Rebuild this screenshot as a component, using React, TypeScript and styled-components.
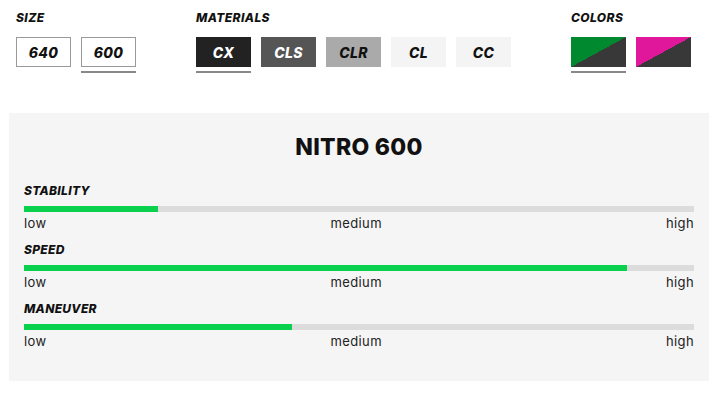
import React from "react";
import styled, { createGlobalStyle } from "styled-components";

const GlobalStyle = createGlobalStyle`
  body {
    margin: 0;
    background: #fff;
    font-family: Inter, "Liberation Sans", sans-serif;
    color: #111;
  }
`;

const Page = styled.div`
  width: 724px;
  height: 402px;
  overflow: hidden;
`;

const Options = styled.div`
  display: flex;
  gap: 60px;
  padding: 10px 16px 0;
`;

const Group = styled.div`
  display: flex;
  flex-direction: column;
`;

const Label = styled.div`
  font-size: 12px;
  line-height: 16px;
  font-weight: 800;
  font-style: italic;
  letter-spacing: 0.4px;
  text-transform: uppercase;
  margin-bottom: 11px;
`;

const Row = styled.div`
  display: flex;
  gap: 10px;
`;

const Choice = styled.div<{ $selected?: boolean }>`
  display: flex;
  flex-direction: column;
  &::after {
    content: "";
    height: 2px;
    margin-top: 4px;
    background: ${p => (p.$selected ? "#888" : "transparent")};
  }
`;

const SizeBox = styled.div`
  width: 55px;
  height: 30px;
  box-sizing: border-box;
  border: 1px solid #999;
  display: flex;
  align-items: center;
  justify-content: center;
  font-size: 14px;
  font-weight: 800;
  font-style: italic;
  letter-spacing: 0.3px;
`;

const MaterialBox = styled.div<{ $bg: string; $fg: string }>`
  width: 55px;
  height: 30px;
  display: flex;
  align-items: center;
  justify-content: center;
  font-size: 14px;
  font-weight: 800;
  font-style: italic;
  letter-spacing: 0.3px;
  background: ${p => p.$bg};
  color: ${p => p.$fg};
`;

const Swatch = styled.div<{ $color: string }>`
  width: 55px;
  height: 30px;
  background: linear-gradient(to bottom right, ${p => p.$color} 50%, #383838 50%);
`;

const Panel = styled.div`
  margin: 40px 0 0 9px;
  width: 700px;
  height: 268px;
  box-sizing: border-box;
  background: #f5f5f5;
  padding: 21px 15px 0;
`;

const Title = styled.h2`
  margin: 0 0 23px;
  text-align: center;
  font-size: 23px;
  line-height: 26px;
  font-weight: 800;
  letter-spacing: 0.3px;
`;

const Stat = styled.div`
  margin-bottom: 10px;
`;

const StatName = styled.div`
  font-size: 12px;
  line-height: 16px;
  font-weight: 800;
  font-style: italic;
  letter-spacing: 0.3px;
  text-transform: uppercase;
  margin-bottom: 7px;
`;

const Track = styled.div`
  height: 6px;
  background: #dcdcdc;
`;

const Fill = styled.div`
  height: 100%;
  background: #09d04d;
`;

const Scale = styled.div`
  display: flex;
  justify-content: space-between;
  margin-top: 2px;
  font-size: 13px;
  line-height: 18px;
  letter-spacing: 0.4px;
  color: #222;
`;

const sizes = [
  { name: "640", selected: false },
  { name: "600", selected: true },
];

const materials = [
  { name: "CX", bg: "#222", fg: "#fff", selected: true },
  { name: "CLS", bg: "#555", fg: "#fff", selected: false },
  { name: "CLR", bg: "#aaa", fg: "#111", selected: false },
  { name: "CL", bg: "#f4f4f4", fg: "#111", selected: false },
  { name: "CC", bg: "#f4f4f4", fg: "#111", selected: false },
];

const colors = [
  { color: "#00892e", selected: true },
  { color: "#e0179a", selected: false },
];

const stats = [
  { name: "Stability", value: 0.2 },
  { name: "Speed", value: 0.9 },
  { name: "Maneuver", value: 0.4 },
];

export default function App() {
  return (
    <Page>
      <GlobalStyle />
      <Options>
        <Group>
          <Label>Size</Label>
          <Row>
            {sizes.map(s => (
              <Choice key={s.name} $selected={s.selected}>
                <SizeBox>{s.name}</SizeBox>
              </Choice>
            ))}
          </Row>
        </Group>
        <Group>
          <Label>Materials</Label>
          <Row>
            {materials.map(m => (
              <Choice key={m.name} $selected={m.selected}>
                <MaterialBox $bg={m.bg} $fg={m.fg}>
                  {m.name}
                </MaterialBox>
              </Choice>
            ))}
          </Row>
        </Group>
        <Group>
          <Label>Colors</Label>
          <Row>
            {colors.map(c => (
              <Choice key={c.color} $selected={c.selected}>
                <Swatch $color={c.color} />
              </Choice>
            ))}
          </Row>
        </Group>
      </Options>
      <Panel>
        <Title>NITRO 600</Title>
        {stats.map(s => (
          <Stat key={s.name}>
            <StatName>{s.name}</StatName>
            <Track>
              <Fill style={{ width: `${s.value * 100}%` }} />
            </Track>
            <Scale>
              <span>low</span>
              <span>medium</span>
              <span>high</span>
            </Scale>
          </Stat>
        ))}
      </Panel>
    </Page>
  );
}
